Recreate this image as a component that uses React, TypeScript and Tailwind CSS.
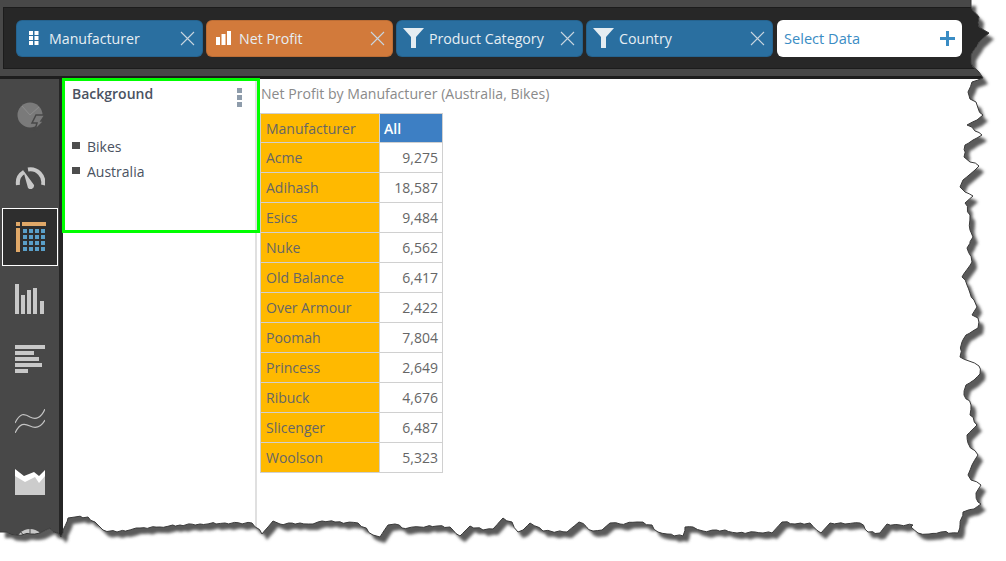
const corners = [
  [971, 0], [971, 7], [979, 17], [979, 27], [989, 33], [979, 42], [971, 55], [971, 63], [979, 72], [983, 78],
  [972, 82], [968, 92], [970, 99], [976, 102], [978, 108], [983, 115], [977, 120], [967, 125], [975, 131], [982, 135],
  [973, 140], [965, 145], [964, 157], [970, 162], [979, 166], [975, 170], [963, 180], [960, 187], [965, 192], [973, 196],
  [965, 203], [970, 215], [970, 230], [973, 237], [967, 248], [972, 262], [962, 277], [967, 285], [970, 293], [974, 300],
  [977, 307], [972, 315], [978, 318], [978, 328], [966, 335], [962, 342], [960, 357], [969, 361], [979, 366], [980, 374],
  [974, 380], [966, 385], [964, 395], [971, 405], [970, 415], [977, 425], [967, 435], [968, 443], [978, 455], [972, 465],
  [968, 475], [971, 480], [981, 485], [976, 493], [978, 502], [981, 504], [974, 509], [963, 512], [958, 533], [941, 532],
  [929, 534], [918, 533], [911, 527], [913, 525], [900, 525], [887, 524], [880, 533], [868, 532], [860, 523], [845, 524],
  [830, 523], [821, 533], [810, 523], [795, 524], [782, 522], [772, 533], [755, 532], [737, 533], [725, 530], [703, 531],
  [693, 527], [685, 527], [683, 536], [667, 534], [658, 532], [652, 525], [637, 522], [620, 524], [610, 523], [602, 530],
  [593, 531], [579, 522], [567, 532], [543, 531], [530, 523], [523, 530], [518, 532], [512, 522], [503, 518], [493, 529],
  [483, 530], [470, 526], [460, 536], [450, 527], [437, 526], [420, 527], [402, 528], [395, 524], [388, 525], [380, 537],
  [373, 535], [358, 523], [335, 522], [322, 521], [313, 524], [300, 523], [280, 524], [273, 521], [262, 534], [252, 523],
  [225, 523], [200, 524], [180, 525], [160, 527], [140, 528], [117, 532], [103, 530], [95, 522], [88, 517], [75, 517],
  [68, 518], [61, 537], [50, 528], [40, 533], [17, 535], [7, 532], [0, 532],
];

// break each traced segment up a little so the tear looks rough rather than polygonal
const roughen = (points: number[][]) => {
  const out: string[] = [];
  points.forEach(([x, y], i) => {
    out.push(`${x},${y}`);
    const next = points[i + 1];
    if (!next) return;
    const steps = Math.floor(Math.hypot(next[0] - x, next[1] - y) / 4);
    for (let s = 1; s < steps; s++) {
      const t = s / steps;
      const n = Math.sin((i + 1) * 7.3 + s * 2.1) * 0.9;
      out.push(`${(x + (next[0] - x) * t + n).toFixed(1)},${(y + (next[1] - y) * t - n).toFixed(1)}`);
    }
  });
  return out.join(" L");
};

const edgeLine = roughen(corners);
const inner = `M${edgeLine} L0,0 Z`;
const outer = `M0,0 H1006 V561 H0 Z ${inner}`;

const rows = [
  ["Acme", "9,275"],
  ["Adihash", "18,587"],
  ["Esics", "9,484"],
  ["Nuke", "6,562"],
  ["Old Balance", "6,417"],
  ["Over Armour", "2,422"],
  ["Poomah", "7,804"],
  ["Princess", "2,649"],
  ["Ribuck", "4,676"],
  ["Slicenger", "6,487"],
  ["Woolson", "5,323"],
];

const CloseIcon = () => (
  <svg width="15" height="15" viewBox="0 0 15 15" className="shrink-0" stroke="#c9d6e0" strokeWidth="1.1" fill="none">
    <path d="M1 1 L14 14 M14 1 L1 14" />
  </svg>
);

const GridIcon = () => (
  <svg width="10" height="14" viewBox="0 0 10 14" fill="#ffffff">
    <rect x="0" y="0" width="4" height="4" />
    <rect x="5.5" y="0" width="4" height="4" />
    <rect x="0" y="5" width="4" height="4" />
    <rect x="5.5" y="5" width="4" height="4" />
    <rect x="0" y="10" width="4" height="4" />
    <rect x="5.5" y="10" width="4" height="4" />
  </svg>
);

const BarsIcon = () => (
  <svg width="15" height="14" viewBox="0 0 15 14" fill="#ffffff">
    <rect x="0" y="6" width="4" height="8" />
    <rect x="5.5" y="3" width="4" height="11" />
    <rect x="11" y="0" width="4" height="14" />
  </svg>
);

const FunnelIcon = () => (
  <svg width="21" height="20" viewBox="0 0 21 20" fill="#e4ecf1">
    <path d="M0 0 H21 L13 9 V20 H8 V9 Z" />
  </svg>
);

const Chip = ({ color, icon, label, iconWidth }: { color: string; icon: React.ReactNode; label: string; iconWidth: string }) => (
  <div className={`flex h-[37px] w-[187px] items-center rounded-md border border-black/10 pr-[7px] text-[#e6eef3] ${color}`}>
    <div className={`flex justify-center ${iconWidth}`}>{icon}</div>
    <span className="flex-1 pt-[1px] text-[14.2px]">{label}</span>
    <CloseIcon />
  </div>
);

const TableIcon = () => (
  <svg width="30" height="30" viewBox="0 0 30 30">
    <rect x="0" y="0" width="4" height="4" fill="#e0a868" />
    <rect x="6" y="0" width="24" height="4" fill="#e0a868" />
    <rect x="0" y="6" width="4" height="24" fill="#e0a868" />
    {[0, 1, 2, 3].map((r) =>
      [0, 1, 2, 3].map((c) => <rect key={`${r}-${c}`} x={7 + c * 6} y={7 + r * 6} width="4" height="4" fill="#5a9fc8" />),
    )}
  </svg>
);

const navIcons = [
  <svg key="pie" width="30" height="30" viewBox="0 0 30 30">
    <circle cx="15" cy="14" r="12.5" fill="#7a7a7a" />
    <path d="M15 14 L7 5 M15 14 L24 6" stroke="#8d8d8d" strokeWidth="1" />
    <path d="M21 14 H30 L26 20 H29 L20 29 L22 22 H17 Z" fill="#7a7a7a" stroke="#484848" strokeWidth="1.5" />
  </svg>,
  <svg key="gauge" width="30" height="24" viewBox="0 -1 30 24">
    <path d="M3 19 A13 13 0 0 1 9 6" fill="none" stroke="#c8c8c8" strokeWidth="4" />
    <path d="M13 3.5 A13 13 0 0 1 28 19" fill="none" stroke="#c8c8c8" strokeWidth="4" />
    <path d="M8 4 L19 19 A3.5 3.5 0 0 1 13 22 Z" fill="#c8c8c8" />
  </svg>,
  <TableIcon key="table" />,
  <svg key="bars" width="30" height="30" viewBox="0 0 30 30" fill="#c8c8c8">
    <rect x="0" y="0" width="4" height="30" />
    <rect x="6" y="11" width="4" height="19" />
    <rect x="12" y="6" width="4" height="24" />
    <rect x="18" y="4" width="4" height="26" />
    <rect x="25" y="17" width="4" height="13" />
  </svg>,
  <svg key="hbars" width="30" height="30" viewBox="0 0 30 30" fill="#c8c8c8">
    <rect x="0" y="0" width="30" height="4" />
    <rect x="0" y="6" width="19" height="4" />
    <rect x="0" y="12" width="24" height="4" />
    <rect x="0" y="18" width="27" height="4" />
    <rect x="0" y="24" width="13" height="4" />
  </svg>,
  <svg key="lines" width="30" height="24" viewBox="0 0 30 24" fill="none" stroke="#c4c4c4" strokeWidth="1.2">
    <path d="M0 14 C5 4 9 4 15 8 C21 11 26 9 30 0" />
    <path d="M0 24 C5 14 9 14 15 17 C21 20 26 18 30 11" />
  </svg>,
  <svg key="area" width="30" height="26" viewBox="0 0 30 26">
    <path d="M0 0 L9 7 L19 3 L24 7 L30 1 V26 H0 Z" fill="#ffffff" />
    <path d="M0 7 L10 13 L20 8 L24 14 L30 7 V26 H0 Z" fill="#cccccc" />
  </svg>,
  <svg key="pie2" width="30" height="30" viewBox="0 0 30 30">
    <circle cx="15" cy="15" r="14" fill="#c8c8c8" />
    <path d="M15 15 L15 0 M15 15 L5 3" stroke="#484848" strokeWidth="1" />
  </svg>,
];

export default function App() {
  return (
    <div className="relative flex h-[561px] w-[1006px] flex-col overflow-hidden bg-white font-['Open_Sans',sans-serif]">
      {/* Top bar */}
      <header className="bg-[#484848] pb-[7px] pl-[3px] pt-[7px]">
        <div className="flex h-[62px] items-center gap-[3px] border border-[#1c1c1c] bg-[#272727] pl-[12px]">
          <Chip color="bg-[#2a6fa0]" iconWidth="w-[32px] pl-[1px]" icon={<GridIcon />} label="Manufacturer" />
          <Chip color="bg-[#d27a3b]" iconWidth="w-[32px]" icon={<BarsIcon />} label="Net Profit" />
          <Chip color="bg-[#2a6fa0]" iconWidth="w-[32px]" icon={<FunnelIcon />} label="Product Category" />
          <Chip color="bg-[#2a6fa0]" iconWidth="w-[32px]" icon={<FunnelIcon />} label="Country" />
          <div className="ml-[1px] flex h-[37px] w-[185px] items-center justify-between rounded-md bg-white pl-[7px] pr-[7px] text-[14.6px] text-[#3a8cc4]">
            <span className="pt-[1px]">Select Data</span>
            <svg width="15" height="15" viewBox="0 0 15 15" stroke="#3a8cc4" strokeWidth="3">
              <path d="M7.5 0 V15 M0 7.5 H15" />
            </svg>
          </div>
        </div>
      </header>

      <div className="flex min-h-0 flex-1 border-t-[3px] border-[#1e1e1e]">
        {/* Chart type rail */}
        <nav className="w-[63px] shrink-0 border-r-4 border-[#262626] bg-[#484848] pt-[6px]">
          {navIcons.map((icon, i) => (
            <div key={i} className="flex h-[61px] items-center justify-center">
              {i === 2 ? (
                <div className="mb-[1px] flex h-[58px] w-[56px] items-center justify-center border border-white bg-[#2e2e2e] pl-[3px]">{icon}</div>
              ) : (
                <div className="flex w-[30px] justify-center">{icon}</div>
              )}
            </div>
          ))}
        </nav>

        {/* Widget panel */}
        <aside className="relative w-[194px] shrink-0 border-r-2 border-[#e0e0e0] pl-[9px] pt-[4px] text-[14px]">
          <div className="flex h-[20px] items-center justify-between pr-[13px]">
            <span className="font-semibold text-[#4a5261]">Background</span>
            <div className="mt-[8px] flex flex-col gap-[2px]">
              <span className="h-[5px] w-[5px] bg-[#8e9cab]" />
              <span className="h-[5px] w-[5px] bg-[#8e9cab]" />
              <span className="h-[5px] w-[5px] bg-[#8e9cab]" />
            </div>
          </div>
          <ul className="mt-[31px] text-[#4a5261]">
            {["Bikes", "Australia"].map((name) => (
              <li key={name} className="flex h-[25px] items-center gap-[7px]">
                <span className="mb-[3px] h-[7px] w-[8px] bg-[#4d4d4d]" />
                {name}
              </li>
            ))}
          </ul>
          <div className="absolute -left-[1px] -top-[1px] h-[155px] w-[198px] border-[3px] border-[#00ff00]" />
        </aside>

        {/* Report */}
        <main className="flex-1 pl-[4px] pt-[5px]">
          <h2 className="h-[29px] text-[14.1px] leading-[20px] text-[#8a8a8a]">Net Profit by Manufacturer (Australia, Bikes)</h2>
          <table className="-ml-[1px] w-[182px] table-fixed border-collapse text-[14px] text-[#666666]">
            <colgroup>
              <col className="w-[119px]" />
              <col className="w-[63px]" />
            </colgroup>
            <thead>
              <tr className="h-[29px]">
                <th className="border border-[#d0d0d0] bg-[#ffb900] px-[5px] text-left font-normal">Manufacturer</th>
                <th className="border border-[#d0d0d0] bg-[#3d7fc4] px-[4px] text-left font-semibold text-white">All</th>
              </tr>
            </thead>
            <tbody>
              {rows.map(([name, value]) => (
                <tr key={name} className="h-[30px]">
                  <td className="border border-[#d0d0d0] bg-[#ffb900] px-[5px]">{name}</td>
                  <td className="border border-[#d0d0d0] px-[4px] text-right">{value}</td>
                </tr>
              ))}
            </tbody>
          </table>
        </main>
      </div>

      {/* Torn paper edge of the screenshot */}
      <svg className="absolute inset-0" width="1006" height="561" viewBox="0 0 1006 561">
        <defs>
          <filter id="tornBlur" x="-5%" y="-5%" width="110%" height="110%">
            <feGaussianBlur stdDeviation="1.6" />
          </filter>
          <clipPath id="outside">
            <path d={outer} clipRule="evenodd" />
          </clipPath>
        </defs>
        <path d={outer} fill="#ffffff" fillRule="evenodd" />
        <g clipPath="url(#outside)">
          <path d={inner} fill="#5a5a5a" filter="url(#tornBlur)" transform="translate(5 6)" />
        </g>
        <path d={`M${edgeLine}`} fill="none" stroke="#3a3a3a" strokeWidth="1" />
      </svg>
    </div>
  );
}
